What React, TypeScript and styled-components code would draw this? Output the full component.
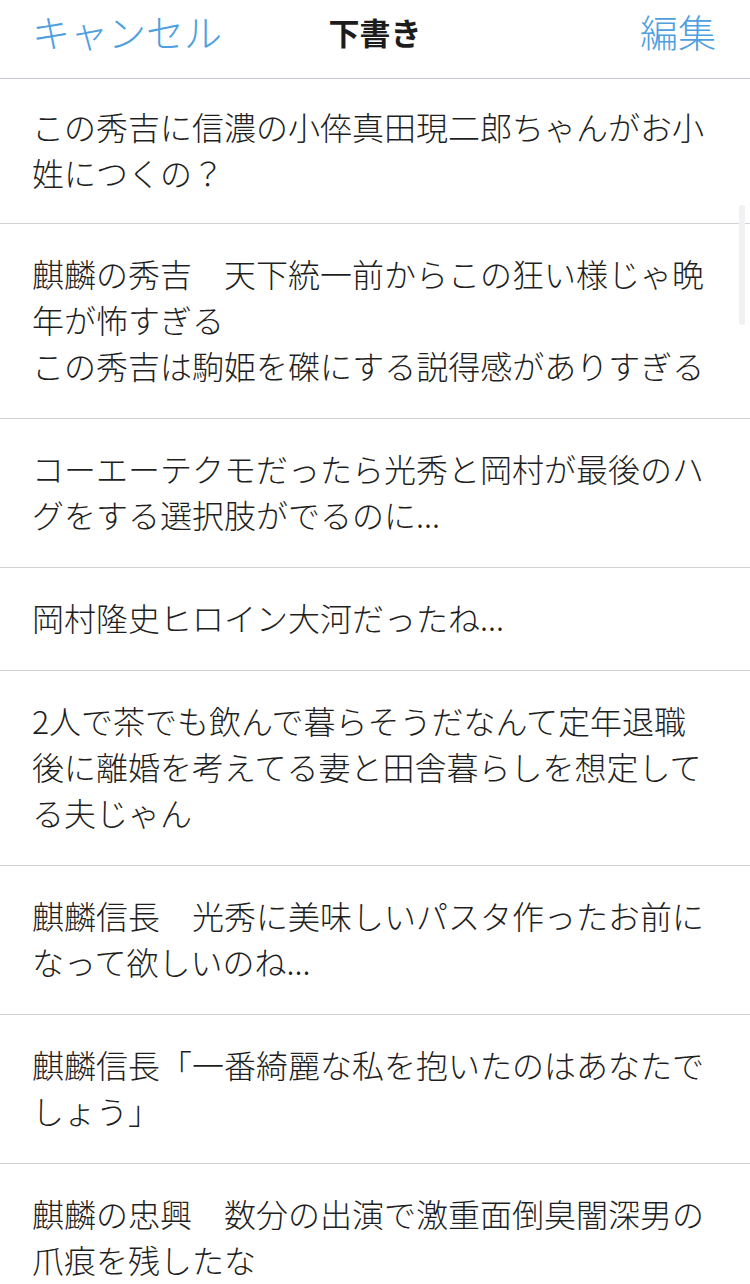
import React from 'react';
import styled, { createGlobalStyle } from 'styled-components';

const GlobalStyle = createGlobalStyle`
  html, body {
    margin: 0;
    padding: 0;
    background: #ffffff;
  }
  body {
    font-family: "Noto Sans CJK JP", "Noto Sans", sans-serif;
    -webkit-font-smoothing: antialiased;
  }
`;

const drafts: string[] = [
  'この秀吉に信濃の小倅真田現二郎ちゃんがお小姓につくの？',
  '麒麟の秀吉　天下統一前からこの狂い様じゃ晩年が怖すぎる\nこの秀吉は駒姫を磔にする説得感がありすぎる',
  'コーエーテクモだったら光秀と岡村が最後のハグをする選択肢がでるのに...',
  '岡村隆史ヒロイン大河だったね...',
  '2人で茶でも飲んで暮らそうだなんて定年退職後に離婚を考えてる妻と田舎暮らしを想定してる夫じゃん',
  '麒麟信長　光秀に美味しいパスタ作ったお前になって欲しいのね...',
  '麒麟信長「一番綺麗な私を抱いたのはあなたでしょう」',
  '麒麟の忠興　数分の出演で激重面倒臭闇深男の爪痕を残したな',
];

const Screen = styled.div`
  position: relative;
  width: 750px;
  height: 1284px;
  overflow: hidden;
  background: #ffffff;
  display: flex;
  flex-direction: column;
`;

const NavBar = styled.header`
  display: grid;
  grid-template-columns: 1fr auto 1fr;
  align-items: center;
  height: 79px;
  padding: 0 34px 16px;
  box-sizing: border-box;
  border-bottom: 1px solid #c3c6cc;
  flex-shrink: 0;
`;

const NavButton = styled.button<{ $align: 'left' | 'right' }>`
  justify-self: ${(p) => (p.$align === 'left' ? 'start' : 'end')};
  border: none;
  background: transparent;
  padding: 0;
  margin-left: ${(p) => (p.$align === 'left' ? '-2px' : '0')};
  font-family: "Noto Sans CJK JP", sans-serif;
  font-size: 38px;
  font-weight: 300;
  line-height: 1;
  color: #4e9fdf;
  cursor: pointer;
`;

const Title = styled.h1`
  margin: 0;
  font-size: 31px;
  font-weight: 700;
  line-height: 1;
  color: #1c1c1c;
`;

const List = styled.ul`
  list-style: none;
  margin: 0;
  padding: 0;
`;

const Row = styled.li`
  padding: 26px 34px 30px 32px;
  border-bottom: 1px solid #d2d2d4;
  font-size: 32px;
  font-weight: 300;
  line-height: 46px;
  color: #1f1f1f;
  white-space: pre-wrap;
  line-break: anywhere;

  &:first-child {
    padding-top: 24px;
    padding-bottom: 28px;
  }
`;

const ScrollThumb = styled.div`
  position: absolute;
  right: 5px;
  top: 205px;
  width: 6px;
  height: 120px;
  border-radius: 3px;
  background: #f1f1f3;
`;

export default function App() {
  return (
    <>
      <GlobalStyle />
      <Screen>
        <NavBar>
          <NavButton $align="left">キャンセル</NavButton>
          <Title>下書き</Title>
          <NavButton $align="right">編集</NavButton>
        </NavBar>
        <List>
          {drafts.map((text, i) => (
            <Row key={i}>{text}</Row>
          ))}
        </List>
        <ScrollThumb />
      </Screen>
    </>
  );
}
